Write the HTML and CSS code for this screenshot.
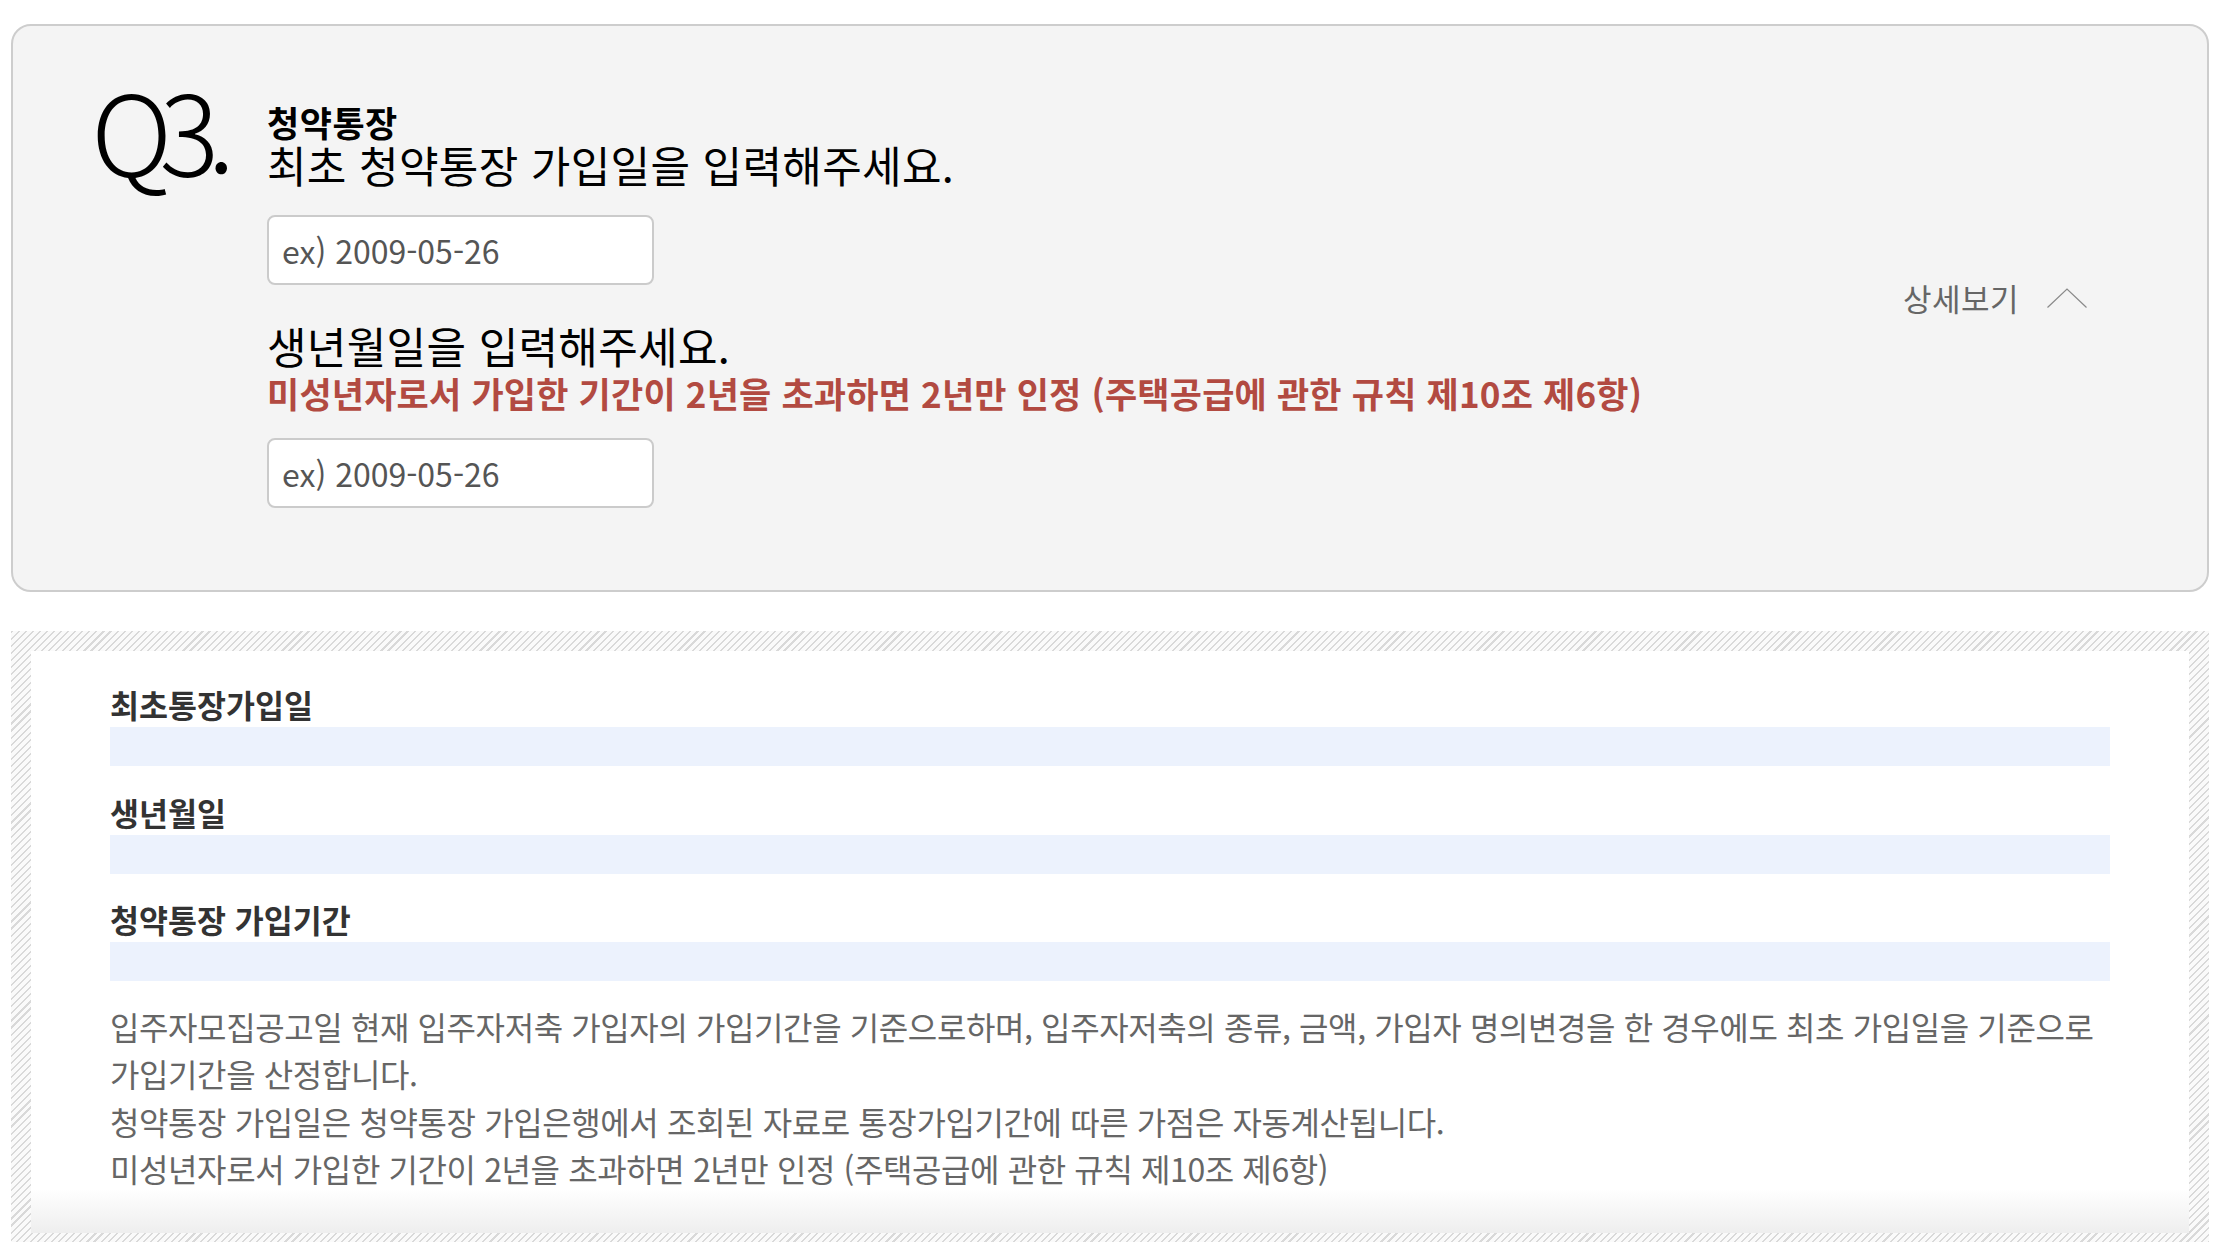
FILE: index.html
```html
<!DOCTYPE html>
<html lang="ko">
<head>
	<meta charset="UTF-8">
	<title>Q3 청약통장</title>
	<link rel="stylesheet" href="styles.css">
</head>
<body>
	<div class="wrap">
		<div class="qbox">
			<div class="qnum">Q3<span class="dot">.</span></div>
			<div class="qbody">
				<p class="qcat">청약통장</p>
				<p class="qtit">최초 청약통장 가입일을 입력해주세요.</p>
				<input type="text" class="ipt" placeholder="ex) 2009-05-26">
				<p class="qtit qtit2">생년월일을 입력해주세요.</p>
				<p class="qnote">미성년자로서 가입한 기간이 2년을 초과하면 2년만 인정 (주택공급에 관한 규칙 제10조 제6항)</p>
				<input type="text" class="ipt" placeholder="ex) 2009-05-26">
			</div>
			<a class="more" href="#">
				<span>상세보기</span>
				<svg width="40" height="20" viewBox="0 0 40 20"><polyline points="0.5,19.5 20,1 39.5,19.5" fill="none" stroke="#8a8a8a" stroke-width="1.2"/></svg>
			</a>
		</div>

		<div class="result">
			<div class="inner">
				<dl class="row">
					<dt>최초통장가입일</dt>
					<dd></dd>
				</dl>
				<dl class="row">
					<dt>생년월일</dt>
					<dd></dd>
				</dl>
				<dl class="row">
					<dt>청약통장 가입기간</dt>
					<dd></dd>
				</dl>
				<div class="desc">
					<p>입주자모집공고일 현재 입주자저축 가입자의 가입기간을 기준으로하며, 입주자저축의 종류, 금액, 가입자 명의변경을 한 경우에도 최초 가입일을 기준으로 가입기간을 산정합니다.</p>
					<p>청약통장 가입일은 청약통장 가입은행에서 조회된 자료로 통장가입기간에 따른 가점은 자동계산됩니다.</p>
					<p>미성년자로서 가입한 기간이 2년을 초과하면 2년만 인정 (주택공급에 관한 규칙 제10조 제6항)</p>
				</div>
			</div>
		</div>
	</div>
</body>
</html>
```

FILE: styles.css
```css
*{
	margin: 0;
	padding: 0;
	box-sizing: border-box;
}
body{
	font-family: "Noto Sans CJK KR", "Noto Sans", sans-serif;
	background-color: #fff;
	color: #000;
	overflow: hidden;
}
.wrap{
	width: 2198px;
	margin-left: 11px;
	padding-top: 24px;
}
.qbox{
	display: flex;
	align-items: flex-start;
	background-color: #f4f4f4;
	border: 2px solid #cdcdcd;
	border-radius: 20px;
	padding: 46px 120px 80px 78px;
	height: 568px;
}
.qnum{
	flex: none;
	width: 176px;
	font-size: 112px;
	line-height: 112px;
	font-weight: 300;
	letter-spacing: -13px;
	color: #000;
}
.qnum .dot{
	margin-left: 1px;
}
.qbody{
	flex: 1;
	display: flex;
	flex-direction: column;
	align-items: flex-start;
	margin-top: 32px;
}
.qcat{
	font-size: 35px;
	line-height: 36px;
	font-weight: 700;
	letter-spacing: 0.5px;
}
.qtit{
	font-size: 43px;
	line-height: 48px;
	letter-spacing: 0.3px;
}
.qtit2{
	margin-top: 36px;
}
.qnote{
	margin-top: 4px;
	font-size: 35px;
	line-height: 40px;
	font-weight: 700;
	letter-spacing: 0.2px;
	color: #b24a41;
}
.ipt{
	width: 387px;
	height: 70px;
	margin-top: 27px;
	border: 2px solid #cbcbcb;
	border-radius: 8px;
	background-color: #fff;
	padding-left: 13px;
	font-family: "Noto Sans CJK KR", "Noto Sans", sans-serif;
	font-size: 32px;
	color: #333;
	outline: none;
}
.ipt::placeholder{
	color: #555;
}
.qnote + .ipt{
	margin-top: 25px;
}
.more{
	flex: none;
	align-self: center;
	margin-top: 12px;
	display: flex;
	align-items: center;
	gap: 28px;
	text-decoration: none;
	color: #666;
	font-size: 31px;
	letter-spacing: 0.5px;
}
.more svg{
	display: block;
	margin-top: 2px;
}

.result{
	position: relative;
	margin-top: 39px;
	padding: 20px;
	background: repeating-linear-gradient(135deg, #d9d9d9 0 1.5px, #fafafa 1.5px 5px);
}
.inner{
	position: relative;
	background-color: #fff;
	padding: 33px 79px 40px 79px;
}
.inner:after{
	content: '';
	position: absolute;
	left: 0;
	right: 0;
	bottom: 0;
	height: 44px;
	background: linear-gradient(to bottom, rgba(240,240,240,0), #eeeeee);
}
.row{
	margin-bottom: 25.5px;
}
.row dt{
	font-size: 31.5px;
	line-height: 40px;
	font-weight: 700;
	color: #333;
}
.row dd{
	margin-top: 3px;
	height: 39px;
	background-color: #ecf2fd;
}
.row:last-of-type{
	margin-bottom: 22px;
}
.desc p{
	font-size: 32px;
	line-height: 47.4px;
	letter-spacing: -0.4px;
	color: #666;
}
```
